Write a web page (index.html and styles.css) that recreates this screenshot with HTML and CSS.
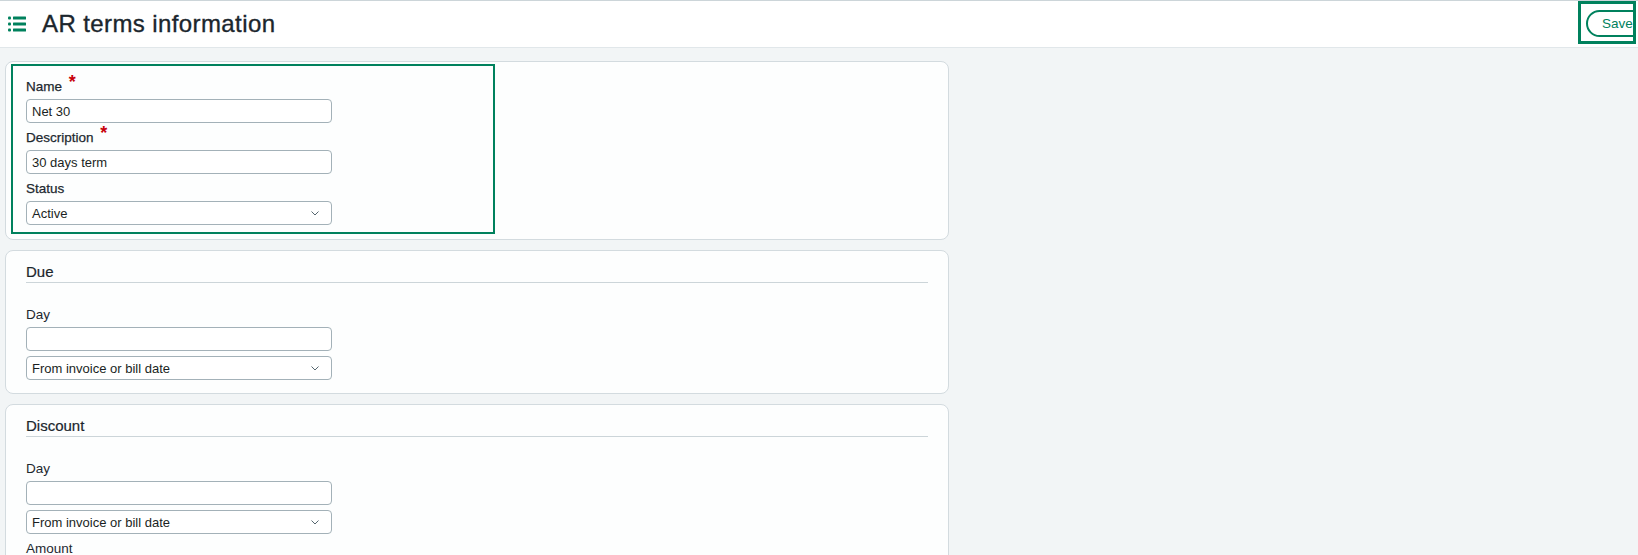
FILE: index.html
```html
<!DOCTYPE html>
<html lang="en">
<head>
<meta charset="utf-8">
<title>AR terms information</title>
<link rel="stylesheet" href="styles.css">
</head>
<body>
<header class="page-header">
  <svg class="list-icon" width="18" height="16" viewBox="0 0 18 16" aria-hidden="true">
    <rect x="0" y="0.5" width="3" height="3" rx="1" fill="#00815d"/>
    <rect x="5" y="0.5" width="13" height="3" rx="0.5" fill="#00815d"/>
    <rect x="0" y="6.5" width="3" height="3" rx="1" fill="#00815d"/>
    <rect x="5" y="6.5" width="13" height="3" rx="0.5" fill="#00815d"/>
    <rect x="0" y="12.5" width="3" height="3" rx="1" fill="#00815d"/>
    <rect x="5" y="12.5" width="13" height="3" rx="0.5" fill="#00815d"/>
  </svg>
  <h1 class="page-title">AR terms information</h1>
  <div class="save-frame">
    <button class="save-btn" type="button">Save</button>
  </div>
</header>

<main class="cards">
  <section class="card card-general">
    <div class="field-group">
      <div class="field">
        <label class="field-label">Name <span class="req">*</span></label>
        <input class="control" type="text" value="Net 30">
      </div>
      <div class="field">
        <label class="field-label">Description <span class="req">*</span></label>
        <input class="control" type="text" value="30 days term">
      </div>
      <div class="field">
        <label class="field-label">Status</label>
        <div class="control select">
          <span>Active</span>
          <svg class="chev" width="8" height="5" viewBox="0 0 8 5" aria-hidden="true"><polyline points="0.5,0.5 4,4 7.5,0.5" fill="none" stroke="#56666f" stroke-width="1"/></svg>
        </div>
      </div>
    </div>
  </section>

  <section class="card card-section">
    <h2 class="section-title">Due</h2>
    <div class="field sub">
      <label class="field-label plain">Day</label>
      <input class="control" type="text" value="">
      <div class="control select gap">
        <span>From invoice or bill date</span>
        <svg class="chev" width="8" height="5" viewBox="0 0 8 5" aria-hidden="true"><polyline points="0.5,0.5 4,4 7.5,0.5" fill="none" stroke="#56666f" stroke-width="1"/></svg>
      </div>
    </div>
  </section>

  <section class="card card-section">
    <h2 class="section-title">Discount</h2>
    <div class="field sub">
      <label class="field-label plain">Day</label>
      <input class="control" type="text" value="">
      <div class="control select gap">
        <span>From invoice or bill date</span>
        <svg class="chev" width="8" height="5" viewBox="0 0 8 5" aria-hidden="true"><polyline points="0.5,0.5 4,4 7.5,0.5" fill="none" stroke="#56666f" stroke-width="1"/></svg>
      </div>
    </div>
    <div class="field amount">
      <label class="field-label plain">Amount</label>
      <input class="control" type="text" value="">
    </div>
  </section>
</main>
</body>
</html>
```
FILE: styles.css
```css
* { box-sizing: border-box; }

body {
  margin: 0;
  background: #f2f5f6;
  font-family: "Liberation Sans", Arial, sans-serif;
  color: #1d2930;
}

.page-header {
  height: 48px;
  background: #ffffff;
  border-top: 1px solid #ccd5d9;
  border-bottom: 1px solid #e1e7ea;
  display: flex;
  align-items: center;
  padding-left: 8px;
}

.list-icon { flex-shrink: 0; display: block; }

.page-title {
  margin: 0 0 0 16px;
  font-size: 24px;
  letter-spacing: 0.4px;
  font-weight: normal;
  line-height: 28px;
  color: #1b262d;
  -webkit-text-stroke: 0.35px #1b262d;
}

.save-frame {
  margin-left: auto;
  margin-right: 2px;
  align-self: flex-start;
  width: 58px;
  height: 43px;
  border: 3px solid #00815d;
  padding: 6px 0 0 5px;
  overflow: hidden;
  display: flex;
}

.save-btn {
  flex-shrink: 0;
  width: 80px;
  height: 27px;
  border: 2px solid #00815d;
  border-radius: 14px;
  background: #ffffff;
  color: #00815d;
  font-family: "Liberation Sans", Arial, sans-serif;
  font-size: 13.5px;
  font-weight: normal;
  text-align: left;
  padding: 0 0 0 14px;
}

.cards {
  width: 949px;
  padding: 13px 0 0 5px;
  display: flex;
  flex-direction: column;
  gap: 10px;
}

.card {
  background: #fdfefe;
  border: 1px solid #d3dbdf;
  border-radius: 8px;
}

.card-general { padding: 2px 0 5px 5px; }

.field-group {
  width: 484px;
  border: 2px solid #00815d;
  padding: 12px 0 7px 13px;
  display: flex;
  flex-direction: column;
  gap: 6px;
}

.field { display: flex; flex-direction: column; }

.field-label {
  display: block;
  font-size: 13.5px;
  line-height: 18px;
  height: 18px;
  margin-bottom: 3px;
  color: #1d2930;
  -webkit-text-stroke: 0.25px #1d2930;
}

.field-label.plain { -webkit-text-stroke: 0; }

.req {
  color: #c8000b;
  font-size: 18px;
  font-weight: bold;
  vertical-align: 3px;
  line-height: 0;
  margin-left: 3px;
  -webkit-text-stroke: 0;
}

.control {
  width: 306px;
  height: 24px;
  border: 1px solid #a3b1b8;
  border-radius: 4px;
  background: #ffffff;
  padding: 0 0 0 5px;
  font-family: "Liberation Sans", Arial, sans-serif;
  font-size: 13px;
  color: #1a1f23;
  outline: none;
}

.select {
  display: flex;
  align-items: center;
  justify-content: space-between;
  padding-right: 12px;
}

.chev { display: block; flex-shrink: 0; }

.card-section { padding: 12px 20px 13px 20px; }

.section-title {
  margin: 0;
  font-size: 15px;
  font-weight: normal;
  line-height: 17px;
  height: 20px;
  padding-bottom: 2px;
  border-bottom: 1px solid #ccd5d9;
  color: #1b262d;
  -webkit-text-stroke: 0.2px #1b262d;
}

.field.sub { margin-top: 23px; }

.select.gap { margin-top: 5px; }

.field.amount { margin-top: 6px; }
```
